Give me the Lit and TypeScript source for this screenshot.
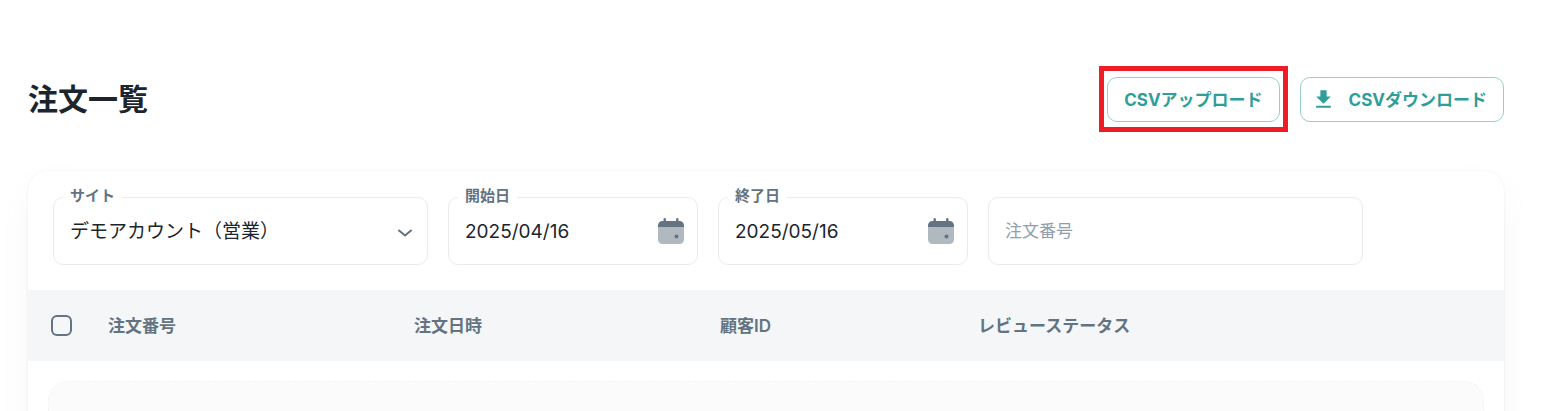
import { LitElement, html, css, svg } from "lit";
import { customElement, property } from "lit/decorators.js";

const downloadIcon = html`<svg class="download" viewBox="0 0 24 24" aria-hidden="true">
  <path d="M19 9h-4V3H9v6H5l7 7 7-7zM5 18v2h14v-2H5z" fill="currentColor" />
</svg>`;

const chevron = svg`<path d="M4 7.500l6 5L16 7.500" fill="none" stroke="currentColor" stroke-width="2" stroke-linecap="round" stroke-linejoin="round" />`;

@customElement("date-field")
class DateField extends LitElement {
  @property() label = "";
  @property() value = "";

  static styles = css`
    :host {
      display: block;
      position: relative;
      min-width: 0;
    }
    * {
      box-sizing: border-box;
    }
    .label {
      position: absolute;
      top: -12px;
      left: 10px;
      padding: 0 7px;
      background: #fff;
      color: #637381;
      font-size: 15px;
      line-height: 22px;
      font-weight: 600;
    }
    .box {
      display: flex;
      align-items: center;
      height: 68px;
      padding: 0 11px 0 16px;
      border: 1px solid #e9ebee;
      border-radius: 10px;
    }
    .input {
      flex: 1;
      width: 100%;
      min-width: 0;
      padding: 0;
      border: 0;
      outline: 0;
      background: none;
      color: #1c252e;
      font: inherit;
      font-size: 19px;
    }
    .pick {
      display: flex;
      padding: 0;
      border: 0;
      background: none;
      color: #637381;
      cursor: pointer;
    }
    .icon {
      width: 30px;
      height: 30px;
    }
  `;

  render() {
    return html`
      <label class="label" for="date">${this.label}</label>
      <div class="box">
        <input class="input" id="date" type="text" .value=${this.value} />
        <button class="pick" type="button" aria-label="${this.label}">
          <svg class="icon" viewBox="0 0 30 30" aria-hidden="true">
            <path d="M2 11h26v12.5a4.5 4.5 0 0 1-4.5 4.5h-17A4.5 4.5 0 0 1 2 23.500z" fill="#b1b9c0" />
            <path d="M2 11V9.500C2 7 4 5 6.500 5h1V3.200a1.200 1.200 0 0 1 2.400 0V5h10.200V3.200a1.200 1.200 0 0 1 2.400 0V5h1C26 5 28 7 28 9.500V11z" fill="currentColor" />
            <circle cx="20.500" cy="20.500" r="2" fill="currentColor" />
          </svg>
        </button>
      </div>
    `;
  }
}

@customElement("app-root")
class AppRoot extends LitElement {
  static styles = css`
    :host {
      display: flex;
      flex-direction: column;
      box-sizing: border-box;
      height: 100vh;
      overflow: hidden;
      padding: 66px 38px 0 28px;
      background: #fff;
      color: #1c252e;
      font-family: Inter, "Noto Sans CJK JP", sans-serif;
      font-size: 17px;
    }
    * {
      box-sizing: border-box;
    }
    .header {
      display: flex;
      align-items: center;
      justify-content: space-between;
      height: 66px;
      margin-bottom: 39px;
    }
    .title {
      margin: 0;
      font-size: 30px;
      line-height: 45px;
      font-weight: 700;
    }
    .actions {
      display: flex;
      gap: 20px;
    }
    .button {
      position: relative;
      display: flex;
      align-items: center;
      gap: 13px;
      height: 45px;
      padding: 0 16px;
      border: 1px solid #97cfcb;
      border-radius: 10px;
      background: #fff;
      color: #2f9e98;
      font: inherit;
      font-weight: 700;
      cursor: pointer;
    }
    .text {
      padding-bottom: 2px;
    }
    .marked::after {
      content: "";
      position: absolute;
      inset: -12px -9px -11px;
      border: 5px solid #ee1c25;
      pointer-events: none;
    }
    .download {
      width: 25px;
      height: 25px;
      margin-left: -6px;
    }
    .card {
      flex: 1;
      display: flex;
      flex-direction: column;
      margin-bottom: -60px;
      border-radius: 20px 20px 0 0;
      background: #fff;
      box-shadow: 0 0 2px rgba(145, 158, 171, 0.2), 0 15px 30px -5px rgba(145, 158, 171, 0.12);
    }
    .filters {
      display: flex;
      gap: 20px;
      padding: 26px 25px 25px;
    }
    .wide {
      flex: 0 1 375px;
    }
    .narrow {
      flex: 0 1 250px;
    }
    .field {
      position: relative;
      min-width: 0;
    }
    .label {
      position: absolute;
      top: -12px;
      left: 10px;
      padding: 0 7px;
      background: #fff;
      color: #637381;
      font-size: 15px;
      line-height: 22px;
      font-weight: 600;
    }
    .control {
      display: block;
      width: 100%;
      height: 68px;
      padding: 0 16px;
      border: 1px solid #e9ebee;
      border-radius: 10px;
      outline: 0;
      background: #fff;
      color: #1c252e;
      font: inherit;
      appearance: none;
    }
    .select {
      font-size: 19px;
    }
    .control::placeholder {
      color: #919eab;
      opacity: 1;
    }
    .chevron {
      position: absolute;
      top: 26px;
      right: 13px;
      width: 20px;
      height: 20px;
      color: #637381;
      pointer-events: none;
    }
    .table {
      width: 100%;
      table-layout: fixed;
      border-collapse: collapse;
    }
    .head {
      height: 71px;
      padding: 0 0 3px 20px;
      background: #f4f6f8;
      color: #637381;
      font-size: 17px;
      font-weight: 600;
      text-align: left;
    }
    .check-cell {
      width: 60px;
      padding-bottom: 0;
    }
    .order {
      width: 306px;
    }
    .customer {
      width: 258px;
    }
    .check {
      display: block;
      width: 21px;
      height: 21px;
      margin: 0 0 0 3px;
      border: 2px solid #637381;
      border-radius: 6px;
      background: none;
      appearance: none;
    }
    .empty {
      flex: 1;
      margin: 20px;
      border: 1px dashed #f2f4f5;
      border-radius: 20px;
      background: #fbfbfc;
    }
  `;

  render() {
    return html`
      <header class="header">
        <h1 class="title">注文一覧</h1>
        <div class="actions">
          <button class="button marked" type="button"><span class="text">CSVアップロード</span></button>
          <button class="button" type="button">${downloadIcon}<span class="text">CSVダウンロード</span></button>
        </div>
      </header>
      <main class="card">
        <div class="filters">
          <div class="field wide">
            <label class="label" for="site">サイト</label>
            <select class="control select" id="site">
              <option>デモアカウント（営業）</option>
            </select>
            <svg class="chevron" viewBox="0 0 20 20" aria-hidden="true">${chevron}</svg>
          </div>
          <date-field class="narrow" label="開始日" value="2025/04/16"></date-field>
          <date-field class="narrow" label="終了日" value="2025/05/16"></date-field>
          <div class="field wide">
            <input class="control" type="text" placeholder="注文番号" aria-label="注文番号" />
          </div>
        </div>
        <table class="table">
          <thead>
            <tr>
              <th class="head check-cell"><input class="check" type="checkbox" aria-label="すべて選択" /></th>
              <th class="head order">注文番号</th>
              <th class="head order">注文日時</th>
              <th class="head customer">顧客ID</th>
              <th class="head">レビューステータス</th>
            </tr>
          </thead>
        </table>
        <div class="empty"></div>
      </main>
    `;
  }
}
